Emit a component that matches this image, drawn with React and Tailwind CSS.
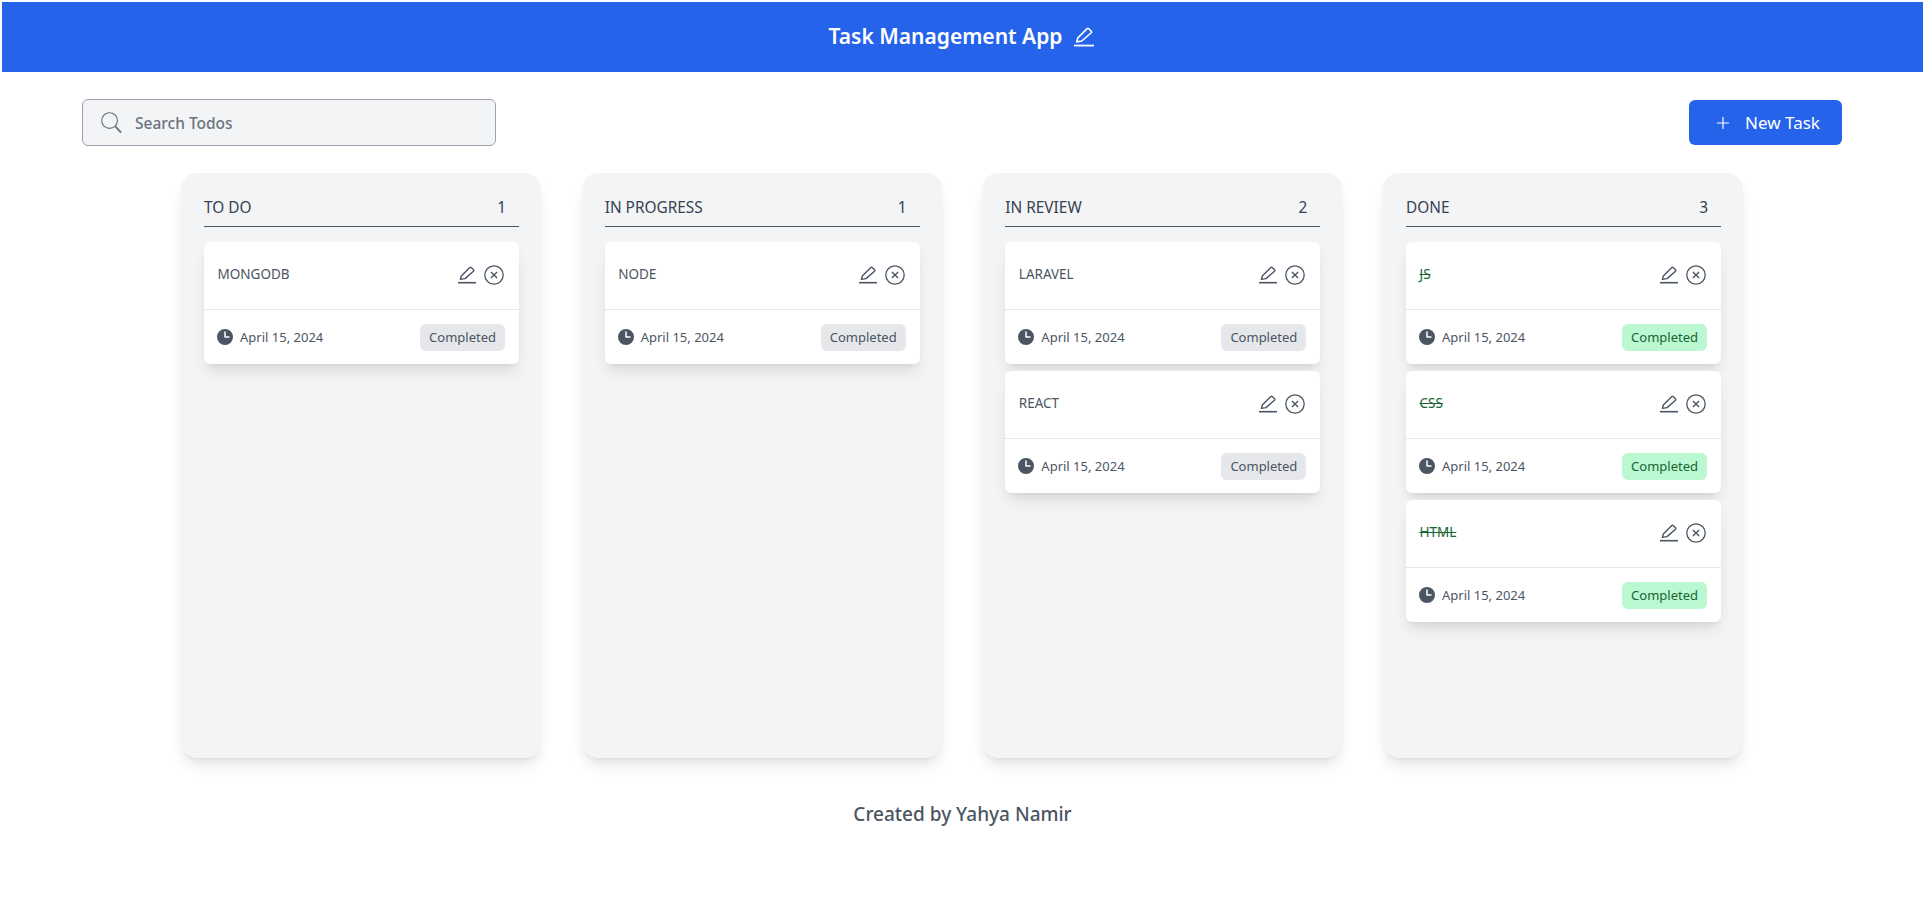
import React from "react";
import { HiMiniClock } from "react-icons/hi2";

const columns = [
    { title: "TO DO", tasks: ["MONGODB"] },
    { title: "IN PROGRESS", tasks: ["NODE"] },
    { title: "IN REVIEW", tasks: ["LARAVEL", "REACT"] },
    { title: "DONE", tasks: ["JS", "CSS", "HTML"], done: true },
];

function EditIcon({ className }) {
    return (
        <svg viewBox="0 0 18 18" fill="none" stroke="currentColor" className={className}>
            <path d="M2.4 13.4 3.3 10 11.8 1.5a1 1 0 0 1 1.4 0l2.3 2.3a1 1 0 0 1 0 1.4L7 12.6Z" strokeWidth="1.4" strokeLinejoin="round" />
            <path d="M0 16.7h18" strokeWidth="1.6" />
        </svg>
    );
}

function CloseIcon() {
    return (
        <svg viewBox="0 0 20 20" fill="none" stroke="currentColor" className="w-[20px] h-[20px]">
            <circle cx="10" cy="10" r="9.2" strokeWidth="1.3" />
            <path d="M6.9 6.9l6.2 6.2M13.1 6.9l-6.2 6.2" strokeWidth="1.4" />
        </svg>
    );
}

function SearchIcon() {
    return (
        <svg viewBox="0 0 24 24" fill="none" stroke="currentColor" className="w-[23px] h-[23px] text-[#6b7280]">
            <circle cx="10" cy="10" r="8.2" strokeWidth="1.2" />
            <path d="M16 16l6 6.5" strokeWidth="2" />
        </svg>
    );
}

function PlusIcon() {
    return (
        <svg viewBox="0 0 16 16" fill="none" stroke="currentColor" className="w-[16px] h-[16px]">
            <path d="M8 2v12M2 8h12" strokeWidth="1.2" />
        </svg>
    );
}

function TaskCard({ title, done }) {
    return (
        <div className="bg-white rounded-md shadow-lg">
            <div className="h-[68px] pl-[13.5px] pr-[15px] flex justify-between items-center border-b border-[#e5e7eb]">
                <span className={`text-[13.5px] pb-[3px] ${done ? "text-[#166534] line-through" : "text-[#4b5563]"}`}>
                    {title}
                </span>
                <div className="flex items-center gap-[8px] pb-[2px] text-[#4b5563]">
                    <EditIcon className="w-[18px] h-[18px]" />
                    <CloseIcon />
                </div>
            </div>
            <div className="h-[54px] pl-[11px] pr-[14px] flex justify-between items-center">
                <div className="flex items-center gap-[5px] text-[13px] text-[#4b5563]">
                    <HiMiniClock className="w-[20px] h-[20px]" />
                    <span className="pt-[2px]">April 15, 2024</span>
                </div>
                <span className={`h-[27px] px-[9px] pt-[1px] flex items-center rounded-md text-[13px] ${done ? "bg-[#bbf7d0] text-[#166534]" : "bg-[#e5e7eb] text-[#4b5563]"}`}>
                    Completed
                </span>
            </div>
        </div>
    );
}

function App() {
    return (
        <div className="pt-[2px] pl-[2px] h-[915px] bg-white overflow-hidden font-['Noto_Sans',sans-serif]">
            <header className="h-[70px] pr-[2px] bg-[#2563eb] text-white flex justify-center items-center gap-[12px]">
                <h1 className="text-[21px] font-semibold">Task Management App</h1>
                <EditIcon className="w-[20px] h-[20px]" />
            </header>

            <div className="mt-[27px] pl-[80px] pr-[81px] flex justify-between items-center">
                <div className="w-[414px] h-[47px] flex items-center gap-[12px] pl-[17px] bg-[#f3f4f6] border border-[#9ca3af] rounded-md text-[15.5px] font-medium text-[#6b7280]">
                    <SearchIcon />
                    <span className="pt-[3px]">Search Todos</span>
                </div>
                <button className="w-[153px] h-[45px] pl-[4px] bg-[#2563eb] text-white rounded-md flex justify-center items-center gap-[14px] text-[17px]">
                    <PlusIcon />
                    New Task
                </button>
            </div>

            <main className="mt-[27px] pr-[1px] flex justify-center gap-[40.67px]">
                {columns.map((col) => (
                    <section key={col.title} className="w-[360px] h-[585px] bg-[#f3f4f6] rounded-2xl shadow-lg pl-[23px] pr-[22px] pt-[23px]">
                        <div className="h-[31px] flex justify-between items-start border-b border-[#4b5563] text-[15.4px] text-[#374151] pr-[13px]">
                            <span>{col.title}</span>
                            <span>{col.tasks.length}</span>
                        </div>
                        <div className="mt-[15px] flex flex-col gap-[7px]">
                            {col.tasks.map((t) => (
                                <TaskCard key={t} title={t} done={col.done} />
                            ))}
                        </div>
                    </section>
                ))}
            </main>

            <footer className="mt-[42px] text-center text-[19px] font-medium text-[#4b5563]">
                Created by Yahya Namir
            </footer>
        </div>
    );
}

export default App;
